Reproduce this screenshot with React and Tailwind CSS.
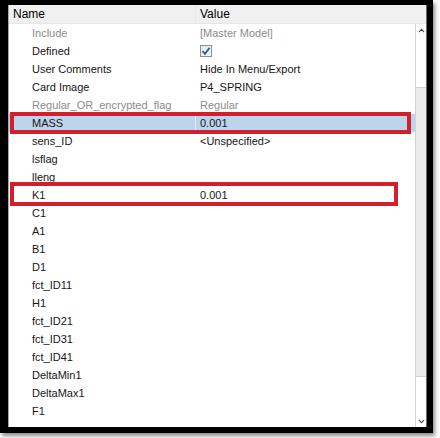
import { ChevronUp, ChevronDown } from 'lucide-react';

const rows = [
  { name: 'Include', value: '[Master Model]', muted: true },
  { name: 'Defined', check: true },
  { name: 'User Comments', value: 'Hide In Menu/Export' },
  { name: 'Card Image', value: 'P4_SPRING' },
  { name: 'Regular_OR_encrypted_flag', value: 'Regular', muted: true },
  { name: 'MASS', value: '0.001', selected: true },
  { name: 'sens_ID', value: '<Unspecified>' },
  { name: 'lsflag', value: '' },
  { name: 'lleng', value: '' },
  { name: 'K1', value: '0.001' },
  { name: 'C1' },
  { name: 'A1' },
  { name: 'B1' },
  { name: 'D1' },
  { name: 'fct_ID11' },
  { name: 'H1' },
  { name: 'fct_ID21' },
  { name: 'fct_ID31' },
  { name: 'fct_ID41' },
  { name: 'DeltaMin1' },
  { name: 'DeltaMax1' },
  { name: 'F1' },
];

function CheckBox() {
  return (
    <div className="w-[12px] h-[12px] border border-[#8f8f8f] bg-gradient-to-br from-[#dfe9f3] to-[#f7fafd] flex items-center justify-center">
      <svg width="10" height="10" viewBox="0 0 10 10">
        <path d="M1.5 5.2 L4 7.8 L8.6 1.8" fill="none" stroke="#2c5e93" strokeWidth="1.8" />
      </svg>
    </div>
  );
}

export default function App() {
  return (
    <div className="w-[440px] h-[438px] bg-white relative overflow-hidden" style={{ fontFamily: '"Liberation Sans", Arial, sans-serif' }}>
      {/* window frame */}
      <div className="w-[433px] h-[433px] bg-black pl-2 pt-[5px] pr-[6px] pb-[6px] shadow-[2px_3px_4px_rgba(0,0,0,0.45)]">
        <div className="h-full flex flex-col bg-white border-l border-[#a8a8a8] border-r border-r-[#6a6a6a]">
          {/* header */}
          <div className="h-[19px] shrink-0 flex items-center bg-[#f0f0f0] border-b border-[#e6e6e6] text-[12px] text-black">
            <div className="w-[187px] pl-[4px] border-r border-[#e8e8e8]">Name</div>
            <div className="pl-[4px]">Value</div>
          </div>
          <div className="flex-1 flex">
            {/* rows */}
            <div className="flex-1 flex flex-col text-[11px] text-[#161616]">
              {rows.map((r) => (
                <div key={r.name} className={`h-[18px] flex items-center ${r.selected ? 'bg-[#bcd5ec]' : ''}`}>
                  <div className={`w-[187px] h-full flex items-center pl-[23px] ${r.muted ? 'text-[#8c8c8c]' : ''} ${r.selected ? 'border-r border-[#e4eef7]' : ''}`}>
                    {r.name}
                  </div>
                  <div className={`pl-[4px] ${r.muted ? 'text-[#8c8c8c]' : ''}`}>
                    {r.check ? <CheckBox /> : r.value}
                  </div>
                </div>
              ))}
            </div>
            {/* scrollbar */}
            <div className="w-[11px] flex flex-col border-l border-[#d4d4d4] bg-white">
              <div className="h-[12px] flex items-center justify-center text-[#444]">
                <ChevronUp size={9} strokeWidth={3} />
              </div>
              <div className="h-[51px]" />
              <div className="h-[290px] bg-[#ebebeb] border-y border-[#d0d0d0]" />
              <div className="flex-1" />
              <div className="h-[12px] flex items-center justify-center text-[#444]">
                <ChevronDown size={9} strokeWidth={3} />
              </div>
            </div>
          </div>
        </div>
      </div>

      {/* red annotation boxes */}
      <div className="absolute left-[10px] top-[112px] w-[401px] h-[22px] border-4 border-[#d21f2b]" />
      <div className="absolute left-[10px] top-[182px] w-[388px] h-[24px] border-4 border-[#d21f2b]" />
    </div>
  );
}
